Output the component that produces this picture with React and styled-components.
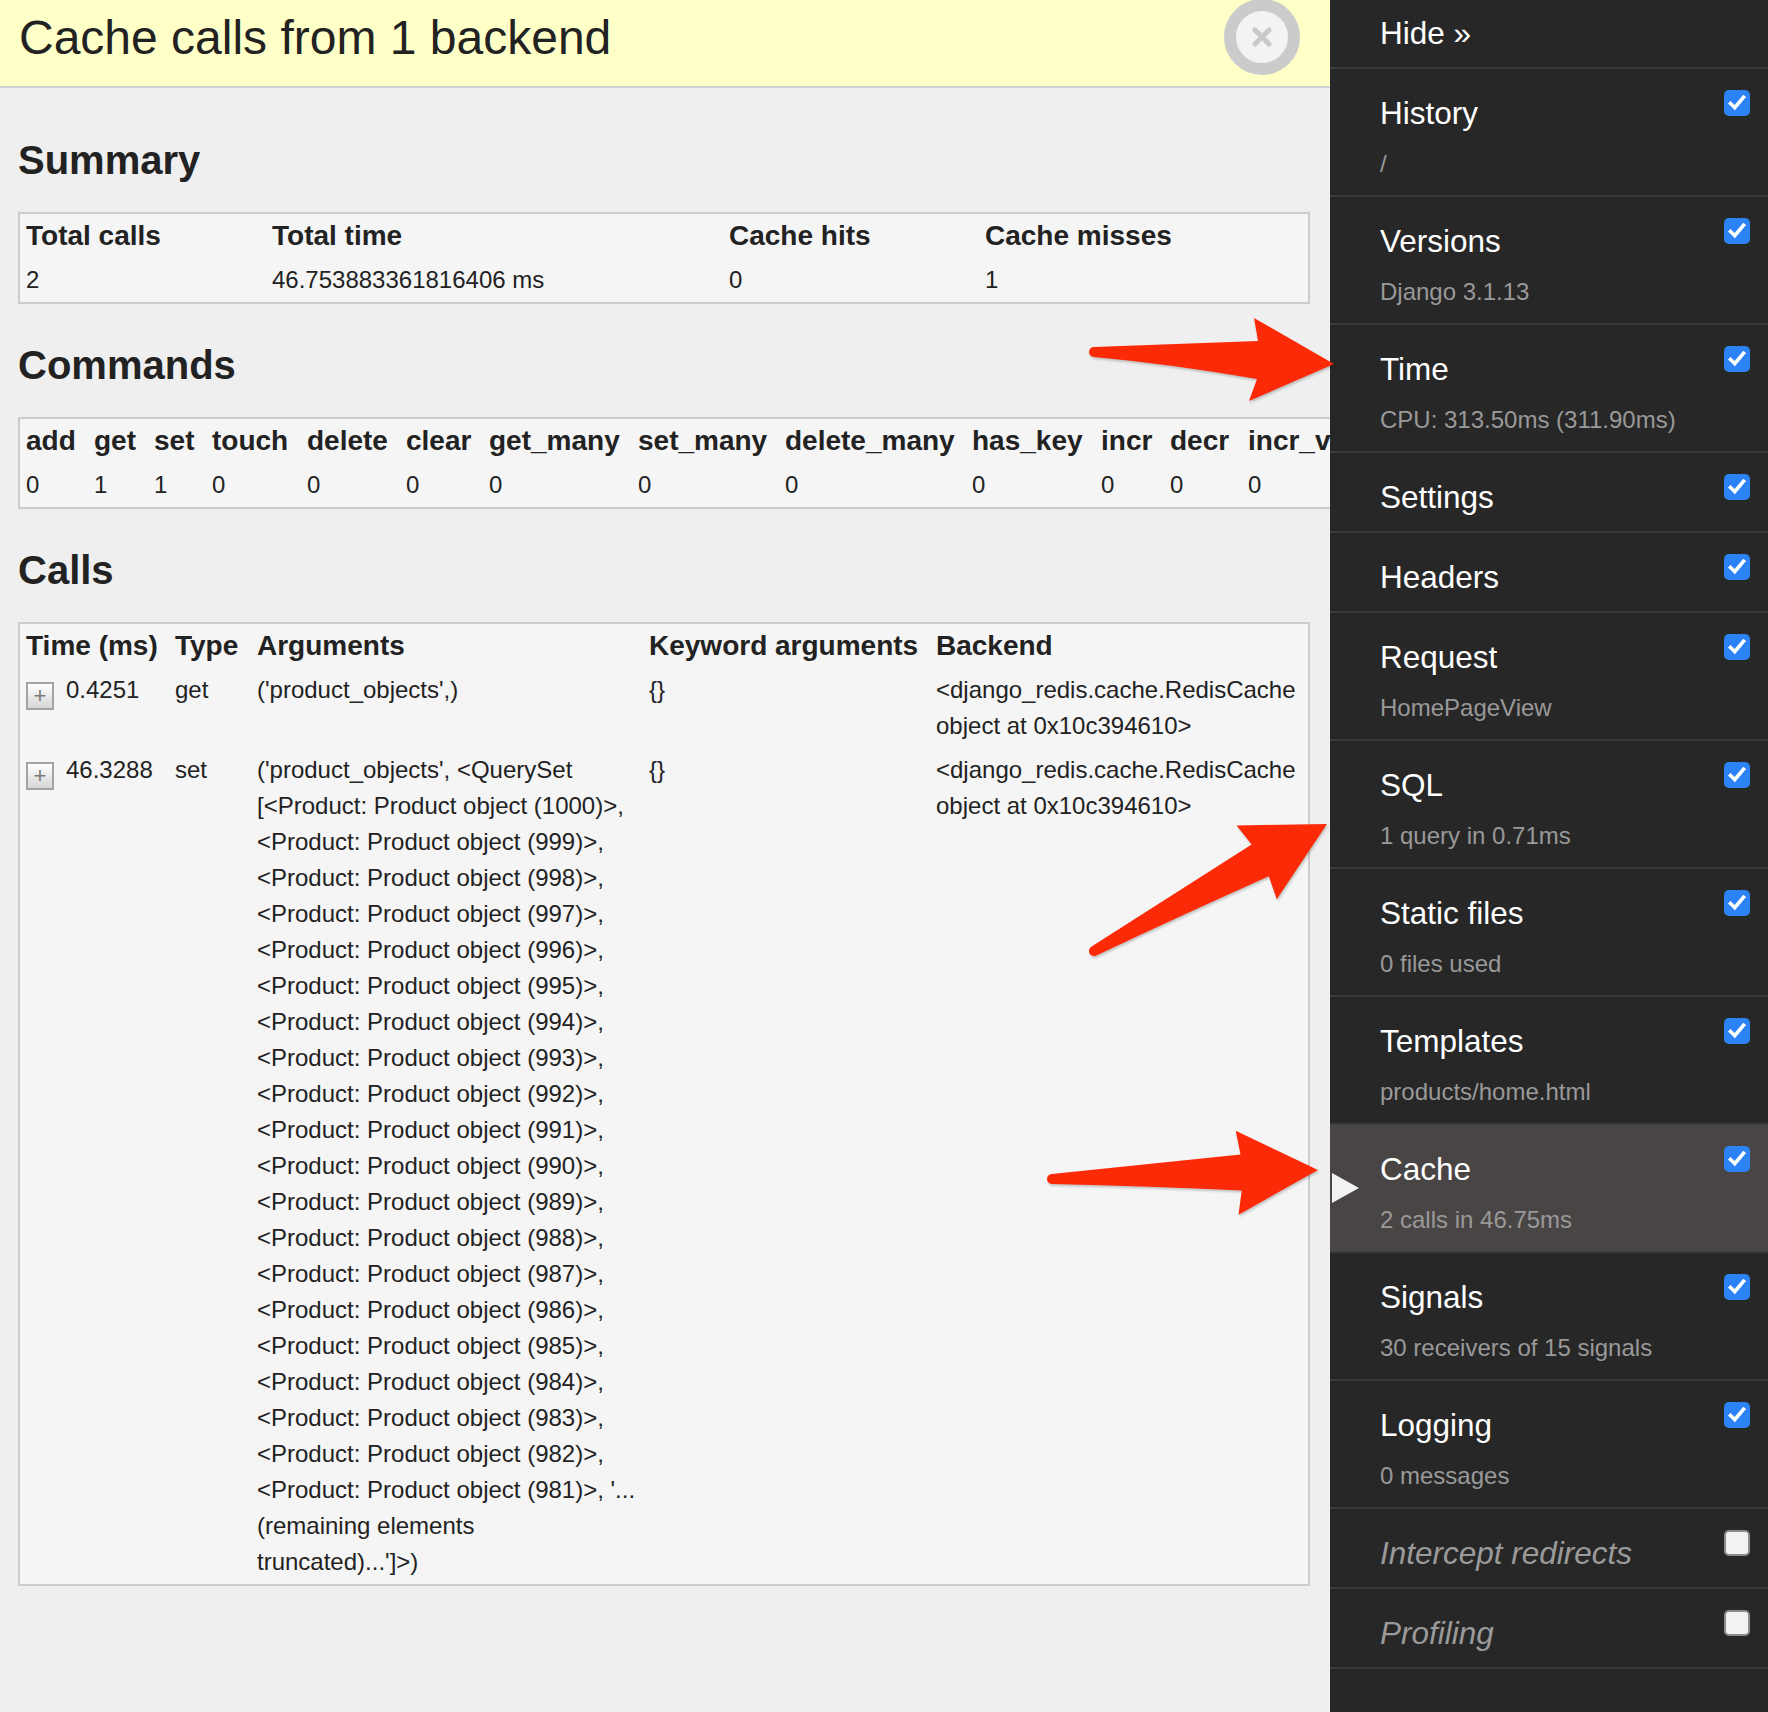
import React from "react";
import styled, { createGlobalStyle } from "styled-components";

const GlobalStyle = createGlobalStyle`
  html, body { margin: 0; padding: 0; }
  body {
    font-family: "Liberation Sans", Arial, Helvetica, sans-serif;
    background: #f0f0f0;
    color: #222;
    overflow: hidden;
  }
`;

const Page = styled.div`
  position: relative;
  display: flex;
  width: 1768px;
  height: 1712px;
  overflow: hidden;
`;

const Panel = styled.section`
  flex: none;
  width: 1330px;
  height: 100%;
  overflow: hidden;
  background: #efefef;
  display: flex;
  flex-direction: column;
`;

const PanelTitle = styled.header`
  flex: none;
  box-sizing: border-box;
  height: 88px;
  display: flex;
  justify-content: space-between;
  align-items: flex-start;
  padding: 0 30px 0 19px;
  background: #ffffc8;
  border-bottom: 2px solid #d2d2d2;
`;

const Title = styled.h3`
  margin: 14px 0 0;
  font-size: 48px;
  line-height: 48px;
  font-weight: normal;
  color: #222;
  white-space: nowrap;
`;

const CloseButton = styled.button`
  flex: none;
  box-sizing: border-box;
  width: 76px;
  height: 76px;
  margin-top: -1px;
  padding: 0;
  border-radius: 50%;
  border: 12px solid #cbcbcb;
  background: #f3f3f3;
  display: flex;
  align-items: center;
  justify-content: center;
`;

const PanelBody = styled.div`
  padding: 11px 20px 0 18px;
`;

const SectionHeading = styled.h4`
  margin: 37px 0 28px;
  font-size: 40px;
  line-height: 48px;
  font-weight: bold;
  color: #222;
`;

const DataTable = styled.table`
  border: 2px solid #cccccc;
  border-collapse: separate;
  border-spacing: 0;
  background: #f5f5f5;
  width: ${(p) => (p.$natural ? "max-content" : "100%")};
  table-layout: ${(p) => (p.$natural ? "auto" : "fixed")};
`;

const Th = styled.th`
  box-sizing: content-box;
  width: ${(p) => (p.$w ? `${p.$w - 12}px` : "auto")};
  padding: 4px 6px;
  text-align: left;
  vertical-align: top;
  font-size: 28px;
  line-height: 36px;
  font-weight: bold;
  color: #222;
  white-space: nowrap;
`;

const Td = styled.td`
  box-sizing: content-box;
  padding: 4px 6px;
  text-align: left;
  vertical-align: top;
  font-size: 24px;
  line-height: 36px;
  color: #222;
  white-space: nowrap;
`;

const Toggle = styled.span`
  display: inline-block;
  box-sizing: border-box;
  width: 28px;
  height: 28px;
  margin: 0 12px 0 0;
  border: 2px solid #a3a3a3;
  background: linear-gradient(#ffffff, #d6d6d6);
  color: #7a7a7a;
  font-size: 22px;
  line-height: 24px;
  text-align: center;
  vertical-align: -5px;
`;

const Toolbar = styled.aside`
  flex: none;
  width: 438px;
  height: 100%;
  background: #272727;
`;

const ToolList = styled.ul`
  list-style: none;
  margin: 0;
  padding: 0;
`;

const ToolItem = styled.li`
  position: relative;
  display: flex;
  justify-content: space-between;
  align-items: flex-start;
  padding: ${(p) => (p.$compact ? "9px 18px 10px 50px" : "20px 18px 10px 50px")};
  border-bottom: 2px solid #3b3b3b;
  background: ${(p) => (p.$active ? "#494545" : "transparent")};
`;

const ItemText = styled.div`
  display: flex;
  flex-direction: column;
`;

const ItemTitle = styled.span`
  font-size: 31.5px;
  line-height: 48px;
  height: 48px;
  color: ${(p) => (p.$disabled ? "#9a9a9a" : "#ffffff")};
  font-style: ${(p) => (p.$disabled ? "italic" : "normal")};
  white-space: nowrap;
`;

const ItemSub = styled.div`
  font-size: 31.5px;
  line-height: 48px;
  height: 48px;
`;

const SubText = styled.small`
  font-size: 24px;
  line-height: 24px;
  color: #999999;
  white-space: nowrap;
`;

const Check = styled.span`
  flex: none;
  box-sizing: border-box;
  width: 26px;
  height: 26px;
  margin-top: 1px;
  border-radius: 5px;
  background: ${(p) => (p.$checked ? "#2c83f6" : "#f2f2f2")};
  border: ${(p) => (p.$checked ? "none" : "2px solid #8c8c8c")};
  display: flex;
  align-items: center;
  justify-content: center;
`;

const ActiveMarker = styled.span`
  position: absolute;
  left: 2px;
  top: 48px;
  width: 0;
  height: 0;
  border-top: 15px solid transparent;
  border-bottom: 15px solid transparent;
  border-left: 27px solid #f2f2f2;
`;

const ArrowOverlay = styled.svg`
  position: absolute;
  left: 0;
  top: 0;
  width: 1768px;
  height: 1712px;
  pointer-events: none;
  filter: drop-shadow(1px 2px 1px rgba(0, 0, 0, 0.2));
`;

const summaryCols = [
  { label: "Total calls", w: 246, value: "2" },
  { label: "Total time", w: 457, value: "46.753883361816406 ms" },
  { label: "Cache hits", w: 256, value: "0" },
  { label: "Cache misses", value: "1" },
];

const commandCols = [
  ["add", 68, "0"],
  ["get", 60, "1"],
  ["set", 58, "1"],
  ["touch", 95, "0"],
  ["delete", 99, "0"],
  ["clear", 83, "0"],
  ["get_many", 149, "0"],
  ["set_many", 147, "0"],
  ["delete_many", 187, "0"],
  ["has_key", 129, "0"],
  ["incr", 69, "0"],
  ["decr", 78, "0"],
  ["incr_version", 190, "0"],
];

const productLines = [];
for (let n = 999; n >= 982; n--) {
  productLines.push(`<Product: Product object (${n})>,`);
}

const calls = [
  {
    time: "0.4251",
    type: "get",
    args: ["('product_objects',)"],
  },
  {
    time: "46.3288",
    type: "set",
    args: [
      "('product_objects', <QuerySet",
      "[<Product: Product object (1000)>,",
      ...productLines,
      "<Product: Product object (981)>, '...",
      "(remaining elements",
      "truncated)...']>)",
    ],
  },
];

const backendLines = ["<django_redis.cache.RedisCache", "object at 0x10c394610>"];

const tools = [
  { title: "History", sub: "/" },
  { title: "Versions", sub: "Django 3.1.13" },
  { title: "Time", sub: "CPU: 313.50ms (311.90ms)" },
  { title: "Settings" },
  { title: "Headers" },
  { title: "Request", sub: "HomePageView" },
  { title: "SQL", sub: "1 query in 0.71ms" },
  { title: "Static files", sub: "0 files used" },
  { title: "Templates", sub: "products/home.html" },
  { title: "Cache", sub: "2 calls in 46.75ms", active: true },
  { title: "Signals", sub: "30 receivers of 15 signals" },
  { title: "Logging", sub: "0 messages" },
  { title: "Intercept redirects", disabled: true },
  { title: "Profiling", disabled: true },
];

function Lines({ lines }) {
  return lines.map((l, i) => (
    <React.Fragment key={i}>
      {i > 0 && <br />}
      {l}
    </React.Fragment>
  ));
}

function CheckMark() {
  return (
    <svg width="26" height="26" viewBox="0 0 26 26">
      <path
        d="M6.5 13.5 L10.8 17.6 L19.5 7.2"
        fill="none"
        stroke="#ffffff"
        strokeWidth="3.6"
        strokeLinecap="square"
      />
    </svg>
  );
}

export default function App() {
  return (
    <>
      <GlobalStyle />
      <Page>
        <Panel>
          <PanelTitle>
            <Title>Cache calls from 1 backend</Title>
            <CloseButton aria-label="Close">
              <svg width="22" height="22" viewBox="0 0 22 22">
                <path
                  d="M4 4 L18 18 M18 4 L4 18"
                  stroke="#c9c9c9"
                  strokeWidth="5"
                  strokeLinecap="round"
                />
              </svg>
            </CloseButton>
          </PanelTitle>
          <PanelBody>
            <SectionHeading>Summary</SectionHeading>
            <DataTable>
              <thead>
                <tr>
                  {summaryCols.map((c) => (
                    <Th key={c.label} $w={c.w}>
                      {c.label}
                    </Th>
                  ))}
                </tr>
              </thead>
              <tbody>
                <tr>
                  {summaryCols.map((c) => (
                    <Td key={c.label}>{c.value}</Td>
                  ))}
                </tr>
              </tbody>
            </DataTable>

            <SectionHeading>Commands</SectionHeading>
            <DataTable $natural>
              <thead>
                <tr>
                  {commandCols.map(([name, w]) => (
                    <Th key={name} $w={w}>
                      {name}
                    </Th>
                  ))}
                </tr>
              </thead>
              <tbody>
                <tr>
                  {commandCols.map(([name, , v]) => (
                    <Td key={name}>{v}</Td>
                  ))}
                </tr>
              </tbody>
            </DataTable>

            <SectionHeading>Calls</SectionHeading>
            <DataTable>
              <thead>
                <tr>
                  <Th $w={149}>Time (ms)</Th>
                  <Th $w={82}>Type</Th>
                  <Th $w={392}>Arguments</Th>
                  <Th $w={287}>Keyword arguments</Th>
                  <Th>Backend</Th>
                </tr>
              </thead>
              <tbody>
                {calls.map((c) => (
                  <tr key={c.time}>
                    <Td>
                      <Toggle>+</Toggle>
                      {c.time}
                    </Td>
                    <Td>{c.type}</Td>
                    <Td>
                      <Lines lines={c.args} />
                    </Td>
                    <Td>{"{}"}</Td>
                    <Td>
                      <Lines lines={backendLines} />
                    </Td>
                  </tr>
                ))}
              </tbody>
            </DataTable>
          </PanelBody>
        </Panel>

        <Toolbar>
          <ToolList>
            <ToolItem $compact>
              <ItemTitle>Hide »</ItemTitle>
            </ToolItem>
            {tools.map((t) => (
              <ToolItem key={t.title} $active={t.active}>
                {t.active && <ActiveMarker />}
                <ItemText>
                  <ItemTitle $disabled={t.disabled}>{t.title}</ItemTitle>
                  {t.sub && (
                    <ItemSub>
                      <SubText>{t.sub}</SubText>
                    </ItemSub>
                  )}
                </ItemText>
                <Check $checked={!t.disabled}>{!t.disabled && <CheckMark />}</Check>
              </ToolItem>
            ))}
          </ToolList>
        </Toolbar>

        <ArrowOverlay viewBox="0 0 1768 1712">
          <path
            fill="#fd2a08"
            d="M1094 347 L1258 341 L1254 318 L1334 364 L1249 401 L1257 379 Q1170 364 1094 357 A5 5 0 0 1 1094 347 Z"
          />
          <path
            fill="#fd2a08"
            d="M1091.6 946.6 L1251.6 844.6 L1236.6 825.4 L1327 824 L1276.8 899.2 L1268.8 876.2 Q1180 916 1096.4 955.4 A5 5 0 0 1 1091.6 946.6 Z"
          />
          <path
            fill="#fd2a08"
            d="M1051.8 1174 L1240.5 1154.6 L1235.7 1130.7 L1318 1170 L1238.5 1214.7 L1241.7 1190.6 Q1150 1186 1052.2 1184 A5 5 0 0 1 1051.8 1174 Z"
          />
        </ArrowOverlay>
      </Page>
    </>
  );
}
